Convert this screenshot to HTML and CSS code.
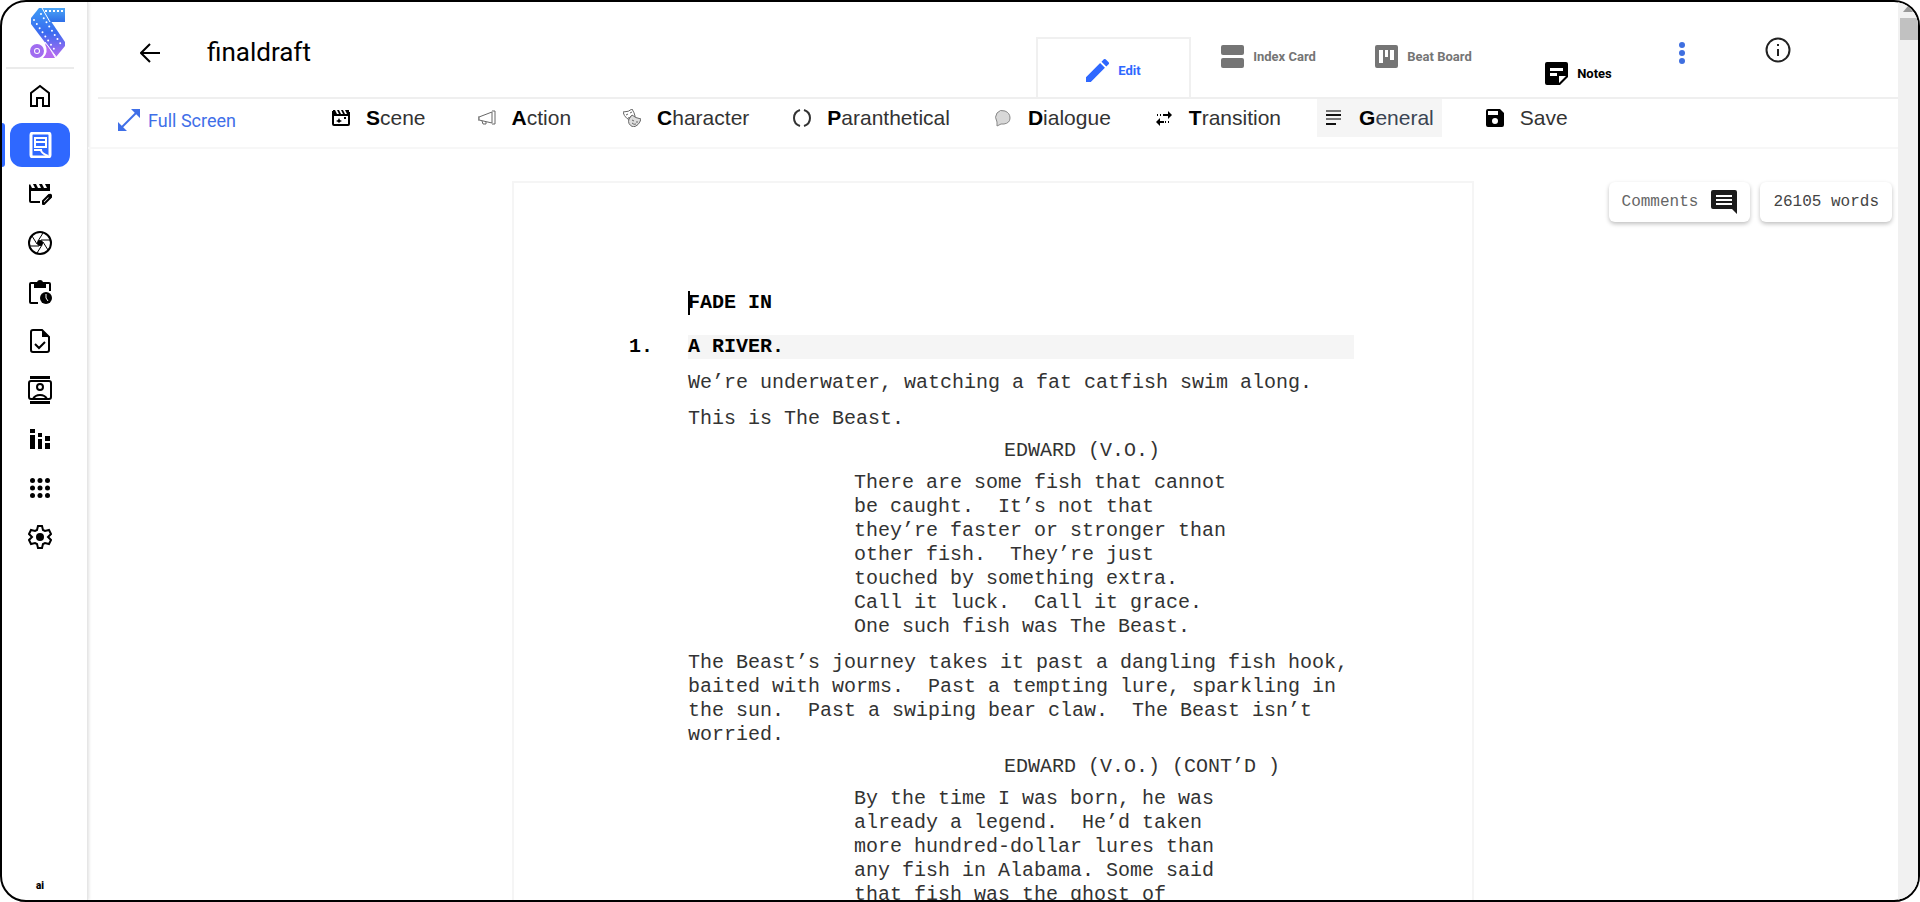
FILE: index.html
```
<!DOCTYPE html>
<html lang="en">
<head>
    <meta charset="UTF-8">
    <meta name="viewport" content="width=device-width, initial-scale=1.0">
    <title>finaldraft</title>
    <link rel="stylesheet" href="styles.css">
</head>
<body>
    <div class="app">
        <aside class="sidebar">
            <a class="logo" href="#" aria-label="Dashboard">
                <svg width="36" height="52" viewBox="0 0 36 52">
                    <defs>
                        <linearGradient id="logoFill" x1="0" y1="0" x2="0" y2="1">
                            <stop offset="0" stop-color="#3d9bf5"/>
                            <stop offset="0.5" stop-color="#3a6bf0"/>
                            <stop offset="1" stop-color="#b46cf0"/>
                        </linearGradient>
                        <linearGradient id="logoTop" x1="0" y1="0" x2="0" y2="1">
                            <stop offset="0" stop-color="#4da6f7"/>
                            <stop offset="1" stop-color="#2f6fe8"/>
                        </linearGradient>
                    </defs>
                    <path fill="url(#logoTop)" d="M11 1h24v14H20z"/>
                    <path fill="url(#logoFill)" d="M9 1 1 11v6l25 33 9-11v-4L12 1z"/>
                    <path fill="#b46cf0" d="M15 37q2 0 3 2l7 12H13q6-6 2-14z"/>
                    <path stroke="#fff" stroke-width="2" stroke-dasharray="2 2" d="M15 4h20"/>
                    <path stroke="#fff" stroke-width="2" stroke-linecap="round" stroke-dasharray="0 5" d="M4 13l22 32M11 7l21 32"/>
                    <path stroke="#fff" d="M12 1l8 14M15 35l12 16"/>
                    <circle cx="7" cy="44" r="5" fill="#fff" stroke="#a06cf0" stroke-width="4"/>
                    <circle cx="7" cy="44" r="2" fill="#a06cf0"/>
                </svg>
            </a>
            <nav class="side-nav">
                <a class="side-link" href="#" aria-label="Home">
                    <svg viewBox="0 0 24 24"><path d="M3 22V9l9-7 9 7v13h-6v-8H9v8z" fill="none" stroke="currentColor" stroke-width="2"/></svg>
                </a>
                <a class="side-link active" href="#" aria-label="Script">
                    <svg viewBox="0 0 26 26"><rect x="4" y="1" width="19" height="24" rx="2" fill="none" stroke="currentColor" stroke-width="3"/><path d="M8 6h11v9H8zM8 10h11M7 18h7q0 3 7 6" fill="none" stroke="currentColor" stroke-width="2"/></svg>
                </a>
                <a class="side-link" href="#" aria-label="Production">
                    <svg viewBox="0 0 24 24"><path d="M2 2l2 4h3L5 2h3l2 4h3l-2-4h3l2 4h3l-2-4h5v7H3v10h9v2H3q-2 0-2-2V3z"/><path d="M15 22v-3l6-6 2 2-7 7z" fill="none" stroke="currentColor" stroke-width="2" stroke-linejoin="round"/><path d="M19 14l2-2q2-1 3 1t0 2l-2 2z"/></svg>
                </a>
                <a class="side-link" href="#" aria-label="Camera">
                    <svg viewBox="0 0 24 24"><circle cx="12" cy="12" r="11" fill="none" stroke="currentColor" stroke-width="2"/><circle cx="12" cy="12" r="3"/><path d="M15 2l-5 8M22 9h-9M20 19l-5-8M9 22l5-8M2 15h9M4 5l5 8" stroke="currentColor" stroke-width="1"/></svg>
                </a>
                <a class="side-link" href="#" aria-label="Schedule">
                    <svg viewBox="0 0 24 24"><path d="M10 23H3q-1 0-1-1V4q0-1 1-1h18q1 0 1 1v7" fill="none" stroke="currentColor" stroke-width="2"/><path d="M6 3h3a3 3 0 0 1 6 0h3v5H6zm6-1a1 1 0 0 0 0 2 1 1 0 0 0 0-2z" fill-rule="evenodd"/><circle cx="18" cy="18" r="6"/><path d="M18 14v4l2 3" fill="none" stroke="#fff"/></svg>
                </a>
                <a class="side-link" href="#" aria-label="Tasks">
                    <svg viewBox="0 0 24 24"><path d="M5 1h9l7 7v13q0 2-2 2H5q-2 0-2-2V3q0-2 2-2z" fill="none" stroke="currentColor" stroke-width="2"/><path d="M14 1v7h7z"/><path d="M7 15l4 4 6-6" fill="none" stroke="currentColor" stroke-width="2"/></svg>
                </a>
                <a class="side-link" href="#" aria-label="Contacts">
                    <svg class="tall" viewBox="0 0 24 28"><path d="M2 0h20v3H2zM2 25h20v3H2z"/><rect x="1" y="5" width="22" height="18" rx="2" fill="none" stroke="currentColor" stroke-width="2"/><circle cx="12" cy="11" r="3" fill="none" stroke="currentColor" stroke-width="2"/><path d="M5 23q2-4 7-4t7 4" fill="none" stroke="currentColor" stroke-width="2"/></svg>
                </a>
                <a class="side-link" href="#" aria-label="Reports">
                    <svg viewBox="0 0 24 24"><path d="M2 2h5v4H2zM2 8h5v14H2zM10 6h4v4h-4zM10 12h4v10h-4zM17 9h5v5h-5zM17 16h5v6h-5z"/></svg>
                </a>
                <a class="side-link" href="#" aria-label="Apps">
                    <svg viewBox="0 0 48 48"><circle cx="9" cy="9" r="5"/><circle cx="24" cy="9" r="5"/><circle cx="39" cy="9" r="5"/><circle cx="9" cy="24" r="5"/><circle cx="24" cy="24" r="5"/><circle cx="39" cy="24" r="5"/><circle cx="9" cy="39" r="5"/><circle cx="24" cy="39" r="5"/><circle cx="39" cy="39" r="5"/></svg>
                </a>
                <a class="side-link" href="#" aria-label="Settings">
                    <svg viewBox="0 0 24 24"><path d="M10 1h4l1 4 2 1 4-1 2 4-3 3 3 3-2 4-4-1-2 1-1 4h-4l-1-4-2-1-4 1-2-4 3-3-3-3 2-4 4 1 2-1z" fill="none" stroke="currentColor" stroke-width="2"/><circle cx="12" cy="12" r="4"/></svg>
                </a>
            </nav>
            <span class="side-mark">ai</span>
        </aside>

        <div class="workspace">
            <header class="topbar">
                <button class="icon-btn back-btn" aria-label="Back">
                    <svg width="20" height="20" viewBox="0 0 20 20"><path d="M20 10H2M10 1l-9 9 9 9" fill="none" stroke="currentColor" stroke-width="2"/></svg>
                </button>
                <h1>finaldraft</h1>
                <nav class="tabs">
                    <a class="tab active" href="#">
                        <svg viewBox="3 3 18 18"><path d="M3 17.250V21h3.750L17.810 9.940l-3.750-3.750L3 17.250zM20.710 7.040a1 1 0 0 0 0-1.410l-2.340-2.340a1 1 0 0 0-1.410 0l-1.830 1.830 3.750 3.750 1.830-1.830z"/></svg>
                        Edit
                    </a>
                    <a class="tab" href="#">
                        <svg viewBox="0 0 23 23"><rect width="23" height="10" rx="2"/><rect y="13" width="23" height="10" rx="2"/></svg>
                        Index Card
                    </a>
                    <a class="tab" href="#">
                        <svg viewBox="0 0 23 23"><path fill-rule="evenodd" d="M2 0h19q2 0 2 2v19q0 2-2 2H2q-2 0-2-2V2q0-2 2-2zm2 5v13h4V5zm6 0v7h3V5zm5 0v10h4V5z"/></svg>
                        Beat Board
                    </a>
                    <a class="tab notes" href="#">
                        <svg viewBox="0 0 23 23"><path fill-rule="evenodd" d="M2 0h19q2 0 2 2v13l-8 8H2q-2 0-2-2V2q0-2 2-2zm3 6v3h13V6zm0 5v3h7v-3zm9 10 7-7h-7z"/></svg>
                        Notes
                    </a>
                </nav>
                <button class="icon-btn more-btn" aria-label="More">
                    <svg width="6" height="22" viewBox="0 0 6 22"><circle cx="3" cy="3" r="3"/><circle cx="3" cy="11" r="3"/><circle cx="3" cy="19" r="3"/></svg>
                </button>
                <button class="icon-btn info-btn" aria-label="Info">
                    <svg width="26" height="26" viewBox="0 0 26 26"><circle cx="13" cy="13" r="11.500" fill="none" stroke="currentColor" stroke-width="2"/><path d="M12 7h2v2h-2zM12 12h2v7h-2z"/></svg>
                </button>
            </header>

            <div class="toolbar">
                <button class="fullscreen-btn">
                    <svg width="22" height="22" viewBox="0 0 22 22"><path d="M13 0h9v9zM0 13v9h9z"/><path d="M3 19 19 3" stroke="currentColor" stroke-width="2"/></svg>
                    Full Screen
                </button>
                <div class="tools">
                    <button class="tool wide">
                        <svg viewBox="0 0 18 18"><path d="M1 2v13q0 1 1 1h14q1 0 1-1V3" fill="none" stroke="currentColor" stroke-width="2"/><path d="M1 1h2l2 4h2L5 1h2l2 4h2L9 1h2l2 4h2l-2-4h4v6H1zM6 11l1-2 1 2 2 1-2 1-1 1-1-1-2-1zM12 8h2v2h-2z"/></svg>
                        <span><b>S</b>cene</span>
                    </button>
                    <button class="tool wide">
                        <svg viewBox="0 0 18 18"><path d="M1 8l13-5v11L1 11zM14 2h3v13h-3M0 7v5M4 12l1 3h3v-2" fill="none" stroke="#666"/></svg>
                        <span><b>A</b>ction</span>
                    </button>
                    <button class="tool">
                        <svg viewBox="0 0 18 18"><path d="M0 3q6 0 9-3 5 8 2 12Q2 11 0 3zM3 6l2-1M7 4l2-1M5 9q2 0 3-2" fill="none" stroke="#666"/><path d="M9 6q3 3 9 4-2 7-8 8-6-3-4-8zM9 11l2 1M13 13h2M9 14q2 2 4 1" fill="#ddd" stroke="#666"/></svg>
                        <span><b>C</b>haracter</span>
                    </button>
                    <button class="tool">
                        <svg viewBox="0 0 18 18"><path d="M7 1Q1 3 1 9t6 8M11 1q6 2 6 8t-6 8" fill="none" stroke="#333" stroke-width="2"/></svg>
                        <span><b>P</b>aranthetical</span>
                    </button>
                    <button class="tool">
                        <svg viewBox="0 0 18 18"><path d="M3 13Q0 8 3 4t8-2q5 2 5 7t-6 6H7l-4 2z" fill="#d8d8d8" stroke="#888"/></svg>
                        <span><b>D</b>ialogue</span>
                    </button>
                    <button class="tool">
                        <svg viewBox="0 0 18 18"><path d="M13 2l4 4-4 4zM5 9l-4 4 4 4z"/><path d="M9 6h5M4 13h5" stroke="currentColor" stroke-width="2"/><path d="M2 6h7M10 13h6" stroke="currentColor" stroke-width="2" stroke-dasharray="1 2"/></svg>
                        <span><b>T</b>ransition</span>
                    </button>
                    <button class="tool active wide">
                        <svg viewBox="0 0 18 18"><path d="M1 2h15M1 10h15" stroke="#777" stroke-width="2"/><path d="M1 6h15M1 15h10" stroke="#111" stroke-width="2"/></svg>
                        <span><b>G</b>eneral</span>
                    </button>
                    <button class="tool">
                        <svg viewBox="0 0 18 18"><path fill-rule="evenodd" d="M2 0h12l4 4v12q0 2-2 2H2q-2 0-2-2V2q0-2 2-2zm0 2v4h10V2zm7 7a3 3 0 0 0 0 6 3 3 0 0 0 0-6z"/></svg>
                        <span>Save</span>
                    </button>
                </div>
            </div>

            <main class="editor">
                <article class="page">
                    <p class="heading fade-in"><span class="caret"></span>FADE IN</p>
                    <div class="scene">
                        <span class="scene-number">1.</span>
                        <p class="heading scene-title">A RIVER.</p>
                    </div>
                    <p class="action">We’re underwater, watching a fat catfish swim along.</p>
                    <p class="action">This is The Beast.</p>
                    <p class="character">EDWARD (V.O.)</p>
                    <p class="dialogue">There are some fish that cannot be caught.  It’s not that they’re faster or stronger than other fish.  They’re just touched by something extra. Call it luck.  Call it grace. One such fish was The Beast.</p>
                    <p class="action">The Beast’s journey takes it past a dangling fish hook, baited with worms.  Past a tempting lure, sparkling in the sun.  Past a swiping bear claw.  The Beast isn’t worried.</p>
                    <p class="character">EDWARD (V.O.) (CONT’D )</p>
                    <p class="dialogue">By the time I was born, he was already a legend.  He’d taken more hundred-dollar lures than any fish in Alabama. Some said that fish was the ghost of</p>
                </article>
                <div class="status">
                    <button class="chip comments">
                        Comments
                        <svg width="26" height="26" viewBox="0 0 26 26"><path fill-rule="evenodd" d="M2 1h22q2 0 2 2v22l-5-5H2q-2 0-2-2V3q0-2 2-2zm3 5v2h16V6zm0 4v2h16v-2zm0 4v2h16v-2z"/></svg>
                    </button>
                    <span class="chip">26105 words</span>
                </div>
            </main>
        </div>

        <div class="scrollbar">
            <span class="scroll-arrow"></span>
            <div class="scroll-thumb"></div>
        </div>
    </div>
</body>
</html>
```
FILE: styles.css
```
* {
    box-sizing: border-box;
}
body {
    margin: 0;
    background-color: #fff;
    color: #000;
    font-family: Roboto, "Liberation Sans", sans-serif;
}
h1, p {
    margin: 0;
}
a {
    color: inherit;
    text-decoration: none;
}
button {
    padding: 0;
    border: none;
    background: none;
    color: inherit;
    font: inherit;
    cursor: pointer;
}
svg {
    display: block;
    flex: none;
    fill: currentColor;
}
.app {
    display: flex;
    height: 100vh;
    overflow: hidden;
    border: 2px solid #000;
    border-radius: 26px;
}

/* Sidebar */
.sidebar {
    display: flex;
    flex-direction: column;
    flex: none;
    width: 86px;
    border-right: 1px solid #e6e6e6;
    box-shadow: 1px 0 3px rgba(0,0,0,0.12);
}
.logo {
    display: flex;
    width: 68px;
    margin-left: 4px;
    padding: 5px 0 8px 24px;
    border-bottom: 2px solid #ebebeb;
}
.side-nav {
    display: flex;
    flex-direction: column;
    gap: 5px;
    margin-top: 5px;
}
.side-link {
    position: relative;
    display: flex;
    align-items: center;
    justify-content: center;
    width: 60px;
    height: 44px;
    margin-left: 8px;
    border-radius: 12px;
}
.side-link svg {
    width: 24px;
    height: 24px;
}
.side-link svg.tall {
    height: 28px;
}
.side-link.active {
    background-color: #2f68ff;
    color: #fff;
}
.side-link.active::before {
    content: "";
    position: absolute;
    left: -8px;
    width: 3px;
    height: 44px;
    border-radius: 0 3px 3px 0;
    background-color: #2f68ff;
}
.side-link.active svg {
    width: 26px;
    height: 26px;
}
.side-mark {
    width: 76px;
    margin: auto 0 8px;
    font-size: 10px;
    font-weight: 900;
    line-height: 12px;
    text-align: center;
}

/* Top bar */
.workspace {
    display: flex;
    flex-direction: column;
    flex: 1;
    min-width: 0;
}
.topbar {
    display: flex;
    align-items: center;
    flex: none;
    height: 97px;
    margin-left: 10px;
    border-bottom: 2px solid #efefef;
}
.icon-btn {
    display: flex;
    align-items: center;
    justify-content: center;
    height: 40px;
}
.back-btn {
    width: 40px;
    margin-left: 32px;
    padding-top: 6px;
}
h1 {
    margin-left: 37px;
    padding-top: 4px;
    font-size: 26px;
    font-weight: 400;
    line-height: 32px;
}
.tabs {
    display: flex;
    align-self: flex-end;
    margin-left: auto;
}
.tab {
    display: flex;
    align-items: center;
    justify-content: center;
    gap: 9px;
    width: 155px;
    height: 60px;
    padding-bottom: 22px;
    color: #757575;
    font-size: 13px;
    font-weight: 700;
}
.tab svg {
    width: 23px;
    height: 23px;
}
.tab.active {
    padding: 4px 0 0;
    border: 2px solid #f0f0f0;
    border-bottom: none;
    color: #2f68ff;
}
.tab.notes {
    padding: 12px 0 0;
    color: #000;
}
.more-btn {
    width: 52px;
    padding-top: 6px;
    color: #3f6fe0;
}
.info-btn {
    width: 140px;
    margin-right: 50px;
    color: #222;
}

/* Formatting toolbar */
.toolbar {
    display: flex;
    flex: none;
    height: 50px;
    padding-left: 30px;
    border-bottom: 2px solid #f7f7f7;
}
.fullscreen-btn {
    display: flex;
    align-items: center;
    gap: 8px;
    width: 206px;
    height: 42px;
    color: #3f6fe8;
    font-size: 18px;
}
.tools {
    display: flex;
    gap: 28px;
    font-family: "Liberation Sans", Arial, sans-serif;
    font-size: 21px;
    color: #333;
}
.tool {
    display: flex;
    align-items: center;
    gap: 16px;
    height: 38px;
    padding: 0 8px;
    white-space: nowrap;
}
.tool.wide {
    margin-right: 8px;
}
.tool.active {
    background-color: #f5f5f5;
    color: #3a4452;
}
.tool svg {
    width: 18px;
    height: 18px;
    color: #000;
}
.tool b {
    color: #000;
}

/* Script page */
.editor {
    position: relative;
    flex: 1;
    min-height: 0;
    padding-top: 32px;
    overflow: hidden;
    font-family: "Liberation Mono", "Courier New", monospace;
}
.page {
    width: 962px;
    min-height: 1240px;
    margin: 0 auto;
    padding: 108px 118px 0 174px;
    border: 2px solid #f5f5f5;
    font-size: 20px;
    line-height: 24px;
    color: #333;
}
.page p {
    white-space: pre-wrap;
}
.page p + p,
.scene + p {
    margin-top: 12px;
}
.heading {
    color: #000;
    font-weight: 700;
}
.caret {
    position: absolute;
    width: 2px;
    height: 24px;
    background-color: #000;
}
.scene {
    display: flex;
    margin: 20px 0 0 -59px;
}
.scene-number {
    width: 59px;
    color: #000;
    font-weight: 700;
}
.scene-title {
    flex: 1;
    background-color: #f5f5f5;
}
.page .character {
    margin-top: 8px;
    margin-left: 316px;
}
.page .character + .dialogue {
    width: 376px;
    margin-top: 8px;
    margin-left: 166px;
}
.status {
    position: absolute;
    top: 33px;
    right: 6px;
    display: flex;
    gap: 10px;
}
.chip {
    display: flex;
    align-items: center;
    gap: 13px;
    height: 40px;
    padding: 0 13px;
    border-radius: 6px;
    background-color: #fff;
    box-shadow: 0 2px 4px rgba(0,0,0,0.25);
    color: #444;
    font-size: 16px;
}
.comments {
    color: #666;
}
.comments svg {
    color: #1c1c1c;
}

/* Scrollbar */
.scrollbar {
    display: flex;
    flex-direction: column;
    align-items: flex-end;
    flex: none;
    width: 20px;
    background-color: #f1f1f1;
}
.scroll-arrow {
    margin: 4px 5px 6px;
    border: 5px solid transparent;
    border-top: none;
    border-bottom: 6px solid #999;
}
.scroll-thumb {
    width: 18px;
    height: 22px;
    background-color: #c1c1c1;
}
```
